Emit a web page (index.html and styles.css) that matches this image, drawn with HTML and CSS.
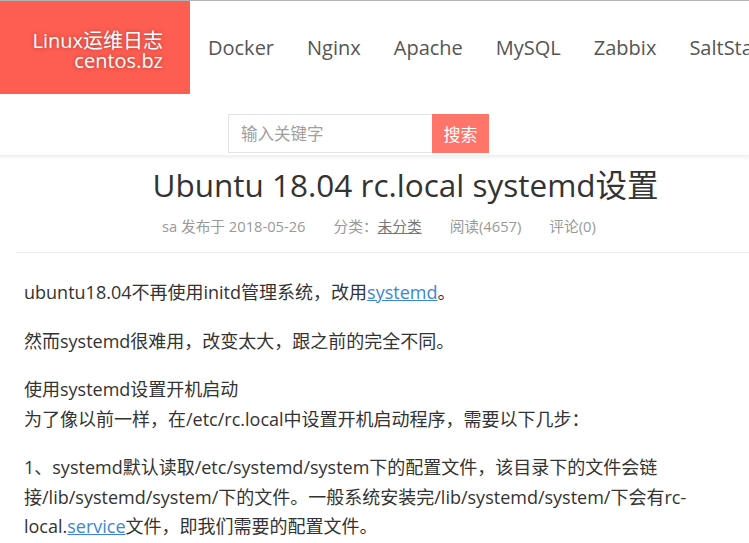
FILE: index.html
```html
<!DOCTYPE html>
<html lang="zh-CN">
<head>
<meta charset="utf-8">
<title>Ubuntu 18.04 rc.local systemd设置</title>
<link rel="stylesheet" href="styles.css">
</head>
<body>
<header class="header">
  <div class="topbar">
    <a class="logo" href="#">
      <span>Linux运维日志</span>
      <span>centos.bz</span>
    </a>
    <nav class="nav">
      <a href="#">Docker</a>
      <a href="#">Nginx</a>
      <a href="#">Apache</a>
      <a href="#">MySQL</a>
      <a href="#">Zabbix</a>
      <a href="#">SaltStack</a>
    </nav>
  </div>
  <form class="search">
    <input class="search-input" type="text" placeholder="输入关键字">
    <button class="search-btn" type="button">搜索</button>
  </form>
</header>
<main class="article">
  <div class="article-head">
    <h1 class="title">Ubuntu 18.04 rc.local systemd设置</h1>
    <div class="meta">
      <span>sa 发布于 2018-05-26</span>
      <span>分类：<a href="#">未分类</a></span>
      <span>阅读(4657)</span>
      <span>评论(0)</span>
    </div>
  </div>
  <div class="content">
    <p>ubuntu18.04不再使用initd管理系统，改用<a href="#">systemd</a>。</p>
    <p>然而systemd很难用，改变太大，跟之前的完全不同。</p>
    <p>使用systemd设置开机启动<br>为了像以前一样，在/etc/rc.local中设置开机启动程序，需要以下几步：</p>
    <p>1、systemd默认读取/etc/systemd/system下的配置文件，该目录下的文件会链接/lib/systemd/system/下的文件。一般系统安装完/lib/systemd/system/下会有rc-local.<a href="#">service</a>文件，即我们需要的配置文件。</p>
  </div>
</main>
</body>
</html>
```

FILE: styles.css
```css
html, body {
  margin: 0;
  padding: 0;
}
body {
  font-family: "Open Sans", "Noto Sans CJK SC", sans-serif;
  color: #333;
  background: #fff;
  border-top: 1px solid #b4b4b4;
  overflow: hidden;
}
a {
  text-decoration: none;
  color: inherit;
}
.header {
  box-shadow: 0 2px 3px rgba(0, 0, 0, 0.06);
  border-bottom: 1px solid #f0f0f0;
}
.topbar {
  display: flex;
  height: 93px;
}
.logo {
  flex: 0 0 190px;
  background: #fe5d51;
  color: #fff;
  display: flex;
  flex-direction: column;
  justify-content: center;
  align-items: flex-end;
  padding: 7px 27px 0 0;
  box-sizing: border-box;
  font-size: 20px;
  line-height: 20px;
  text-shadow: 0 0 4px rgba(0, 0, 0, 0.35);
}
.nav {
  display: flex;
  align-items: center;
  gap: 33px;
  padding-left: 18px;
  white-space: nowrap;
  font-size: 20px;
  color: #555;
}
.search {
  display: flex;
  padding: 20px 0 2px 228px;
  margin: 0;
}
.search-input {
  width: 204px;
  height: 39px;
  box-sizing: border-box;
  border: 1px solid #e3e3e3;
  border-right: none;
  padding: 0 12px;
  font-family: inherit;
  font-size: 16.5px;
  color: #333;
  outline: none;
}
.search-input::placeholder {
  color: #a0a0a0;
}
.search-btn {
  width: 57px;
  height: 39px;
  border: none;
  background: #ff756a;
  color: #fff;
  font-family: inherit;
  font-size: 17px;
  padding: 0;
}
.article {
  margin-left: 16px;
}
.article-head {
  border-bottom: 1px solid #ececec;
  padding-bottom: 16px;
}
.title {
  margin: 0;
  padding: 9px 0 0 46px;
  font-size: 31.5px;
  font-weight: normal;
  line-height: 40px;
  text-align: center;
  color: #333;
}
.meta {
  display: flex;
  gap: 28px;
  padding-left: 146px;
  margin-top: 11px;
  font-size: 14.7px;
  line-height: 20px;
  color: #999;
}
.meta a {
  color: #777;
  text-decoration: underline;
}
.content {
  padding: 25px 30px 0 8px;
  font-size: 18px;
  line-height: 29.5px;
}
.content p {
  margin: 0 0 19px;
}
.content a {
  color: #3b87d6;
  text-decoration: underline;
}
```
